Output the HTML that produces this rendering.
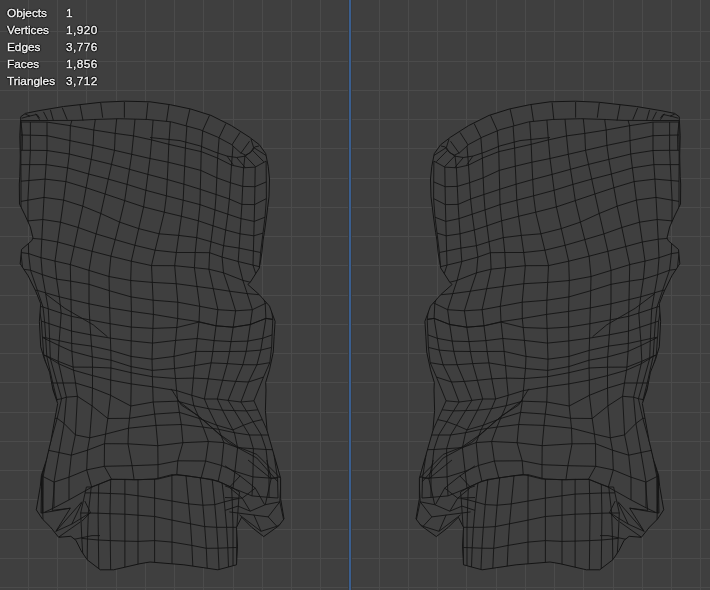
<!DOCTYPE html>
<html><head><meta charset="utf-8"><style>
html,body{margin:0;padding:0;width:710px;height:590px;overflow:hidden;background:#3f3f3f}
.t{position:absolute;font-family:"Liberation Sans",sans-serif;font-size:11.8px;line-height:14px;color:#f4f4f4;white-space:nowrap;text-shadow:1px 0 1px #000,-1px 0 1px #000,0 1px 1px #000,0 -1px 1px #000;-webkit-text-stroke:0.35px #f4f4f4;will-change:transform}
</style></head><body>
<svg width="710" height="590" viewBox="0 0 710 590" style="position:absolute;left:0;top:0"><rect width="710" height="590" fill="#3f3f3f"/><path d="M28.5 0V590M57.5 0V590M86.5 0V590M116.5 0V590M145.5 0V590M174.5 0V590M203.5 0V590M233.5 0V590M262.5 0V590M291.5 0V590M320.5 0V590M350.5 0V590M379.5 0V590M408.5 0V590M437.5 0V590M466.5 0V590M496.5 0V590M525.5 0V590M554.5 0V590M583.5 0V590M613.5 0V590M642.5 0V590M671.5 0V590M700.5 0V590M0 31.5H710M0 61.5H710M0 90.5H710M0 119.5H710M0 148.5H710M0 178.5H710M0 207.5H710M0 236.5H710M0 265.5H710M0 295.5H710M0 324.5H710M0 353.5H710M0 382.5H710M0 412.5H710M0 441.5H710M0 470.5H710M0 499.5H710M0 529.5H710M0 558.5H710M0 587.5H710" stroke="#4b4b4b" stroke-width="1" fill="none"/><rect x="348" y="0" width="4" height="590" fill="#3a3a3a"/><rect x="349" y="0" width="2" height="590" fill="#3a5e8e"/><defs><clipPath id="cl"><polygon points="20.8,116.7 25.4,113.4 38.1,110.8 63.6,106.5 101.7,102.2 124.6,101.2 150.0,101.8 170.3,104.7 190.7,109.0 211.0,115.4 231.4,125.6 249.2,137.0 259.3,144.7 265.7,153.6 268.2,166.3 269.5,179.0 269.0,196.8 266.5,217.0 264.4,232.4 263.1,240.0 261.9,252.7 259.3,268.0 250.4,282.0 247.9,284.5 259.3,294.7 269.5,306.1 275.1,321.4 274.1,336.6 273.3,351.9 269.5,369.7 265.7,382.4 266.0,390.0 265.4,410.4 267.1,430.7 273.9,454.5 280.6,478.2 280.6,498.6 284.0,518.9 278.9,525.7 263.7,536.6 251.8,527.4 241.6,517.2 236.5,527.4 237.5,546.1 236.5,564.8 217.9,569.8 183.9,564.8 150.0,562.0 140.0,563.7 113.6,569.8 100.3,569.8 87.1,559.7 81.0,550.5 75.9,540.3 70.8,536.3 58.6,537.3 50.5,527.1 42.4,519.0 36.3,509.8 40.3,486.4 41.4,475.3 46.4,460.0 50.9,440.9 57.7,403.6 53.0,390.0 49.6,372.2 44.5,359.5 40.7,346.8 39.4,321.4 40.7,303.6 35.6,290.9 28.0,275.6 20.2,263.8 21.5,249.5 31.7,240.7 33.0,238.0 30.4,227.1 24.9,214.9 19.5,204.0 19.3,184.0 19.8,176.4 20.3,156.0 19.8,135.8"/></clipPath></defs><g><polygon points="20.8,116.7 25.4,113.4 38.1,110.8 63.6,106.5 101.7,102.2 124.6,101.2 150.0,101.8 170.3,104.7 190.7,109.0 211.0,115.4 231.4,125.6 249.2,137.0 259.3,144.7 265.7,153.6 268.2,166.3 269.5,179.0 269.0,196.8 266.5,217.0 264.4,232.4 263.1,240.0 261.9,252.7 259.3,268.0 250.4,282.0 247.9,284.5 259.3,294.7 269.5,306.1 275.1,321.4 274.1,336.6 273.3,351.9 269.5,369.7 265.7,382.4 266.0,390.0 265.4,410.4 267.1,430.7 273.9,454.5 280.6,478.2 280.6,498.6 284.0,518.9 278.9,525.7 263.7,536.6 251.8,527.4 241.6,517.2 236.5,527.4 237.5,546.1 236.5,564.8 217.9,569.8 183.9,564.8 150.0,562.0 140.0,563.7 113.6,569.8 100.3,569.8 87.1,559.7 81.0,550.5 75.9,540.3 70.8,536.3 58.6,537.3 50.5,527.1 42.4,519.0 36.3,509.8 40.3,486.4 41.4,475.3 46.4,460.0 50.9,440.9 57.7,403.6 53.0,390.0 49.6,372.2 44.5,359.5 40.7,346.8 39.4,321.4 40.7,303.6 35.6,290.9 28.0,275.6 20.2,263.8 21.5,249.5 31.7,240.7 33.0,238.0 30.4,227.1 24.9,214.9 19.5,204.0 19.3,184.0 19.8,176.4 20.3,156.0 19.8,135.8" fill="#3f3f3f"/><path d="M21.0 122.0 L30.4 122.0 L47.0 122.1 L70.4 125.7 L93.8 130.0 L115.2 133.4 L133.5 135.9 L151.6 139.9 L168.8 144.3 L185.4 148.1 L201.2 151.6 L217.6 158.1 L231.5 165.1 L243.6 167.8 L255.2 167.1 L266.1 161.1M21.0 135.0 L30.4 135.2 L47.0 135.7 L70.0 140.6 L93.1 145.4 L114.5 150.3 L131.7 154.3 L150.0 158.5 L168.1 162.2 L184.7 166.2 L200.8 170.4 L216.8 177.8 L230.4 182.7 L242.7 186.4 L254.9 186.7 L266.3 181.9M20.9 150.3 L30.4 150.3 L47.0 150.5 L69.3 154.0 L91.2 159.4 L111.5 164.4 L129.5 169.3 L147.9 174.4 L167.3 179.5 L183.9 184.2 L200.3 189.3 L216.1 194.5 L229.4 199.0 L241.9 204.4 L254.6 204.6 L266.4 198.6M20.9 164.6 L29.7 164.6 L46.1 164.6 L67.6 167.9 L88.6 174.0 L108.3 179.1 L127.1 184.4 L145.9 190.3 L166.4 195.8 L183.2 200.2 L200.0 204.6 L215.0 209.9 L227.8 214.2 L241.0 218.6 L254.2 221.4 L265.0 217.2M21.0 181.2 L28.9 180.5 L45.1 179.1 L65.9 181.6 L86.1 187.7 L105.1 194.0 L124.7 200.6 L143.6 206.9 L164.3 212.2 L181.4 216.3 L198.4 220.8 L213.0 225.8 L225.7 230.0 L240.0 233.8 L253.8 235.8 L263.0 233.1M21.0 201.4 L27.9 200.2 L44.0 197.4 L63.6 200.1 L82.8 206.2 L100.8 213.5 L119.6 222.1 L138.7 228.6 L159.1 233.8 L178.7 235.4 L196.7 237.6 L211.0 241.7 L223.6 245.7 L239.1 248.1 L253.4 251.0 L260.6 252.5M21.0 221.5 L28.0 220.9 L42.8 219.5 L60.5 222.2 L78.2 227.5 L96.1 233.9 L115.2 239.6 L134.9 245.3 L155.1 250.2 L176.3 252.5 L195.2 252.5 L209.6 252.7 L222.1 257.1 L238.2 261.5 L253.0 265.1 L259.5 266.7M20.9 238.0 L28.3 238.0 L41.8 239.2 L57.7 242.0 L74.2 246.5 L92.1 251.3 L110.9 256.2 L131.3 261.2 L151.5 265.6 L174.7 265.7 L194.4 267.7 L208.9 269.2 L223.5 272.8 L242.9 280.4 L259.2 284.5 L265.2 284.5M20.9 252.5 L28.6 253.6 L41.0 257.7 L55.0 261.1 L70.3 264.6 L89.0 270.4 L109.0 276.5 L130.7 280.5 L152.3 282.4 L176.2 283.7 L197.0 286.5 L213.3 288.7 L229.6 291.2 L247.2 293.6 L262.5 295.0 L268.5 295.0M22.7 269.2 L30.5 270.2 L42.3 274.6 L56.6 279.1 L70.6 281.1 L89.0 284.3 L109.3 290.7 L131.1 296.9 L153.1 300.2 L177.8 302.2 L199.7 306.3 L217.9 309.7 L235.6 310.8 L252.4 309.7 L265.2 303.5 L270.4 301.0M31.8 290.0 L37.4 290.4 L45.5 292.8 L59.3 296.8 L71.0 299.6 L89.0 303.8 L109.7 307.9 L131.4 311.4 L153.4 314.4 L177.7 318.5 L199.0 321.7 L216.0 325.8 L233.2 327.2 L250.3 324.5 L265.9 318.4 L272.8 319.4M38.8 306.0 L43.0 307.0 L48.3 308.8 L61.2 313.1 L71.3 316.3 L89.7 319.9 L110.1 323.7 L131.3 327.1 L152.9 328.4 L176.8 327.5 L198.9 322.1 L216.0 325.8 L233.2 327.2 L250.3 324.5 L265.9 318.4 L272.8 319.4M41.4 321.1 L44.7 322.2 L49.0 323.6 L60.2 327.3 L71.5 331.1 L90.7 334.8 L110.4 338.1 L131.2 340.9 L152.5 343.1 L175.6 340.4 L197.2 338.5 L214.1 340.6 L231.0 341.6 L247.8 341.1 L262.7 338.3 L272.1 334.9M42.4 337.1 L45.7 337.8 L49.6 338.6 L59.2 340.7 L71.7 343.4 L91.5 346.1 L110.8 350.4 L131.0 356.4 L152.0 359.2 L174.0 356.4 L195.9 351.4 L212.8 351.5 L229.6 351.5 L246.2 351.3 L260.8 350.1 L271.6 347.4M42.5 337.5 L45.7 339.1 L49.7 341.0 L58.9 345.5 L71.9 351.4 L92.3 356.9 L111.0 360.2 L131.1 366.6 L152.3 370.4 L174.5 368.5 L194.5 365.6 L211.1 362.9 L227.3 363.6 L242.9 364.7 L256.9 364.8 L269.8 362.7M43.7 355.0 L46.8 356.0 L50.3 357.7 L58.2 361.3 L73.1 367.1 L92.5 367.2 L110.9 368.0 L131.1 372.7 L152.4 376.7 L175.5 378.5 L193.4 378.1 L208.2 378.8 L222.6 380.3 L235.7 381.4 L248.5 382.0 L263.5 377.1M43.7 355.0 L46.8 356.4 L50.3 358.6 L58.8 363.8 L73.5 370.2 L92.5 375.6 L110.7 380.1 L131.2 383.9 L152.7 386.8 L176.6 390.6 L191.8 395.3 L204.4 399.0 L217.3 399.0 L228.1 400.4 L240.9 402.0 L253.9 400.8M51.1 383.0 L52.8 383.0 L57.1 383.0 L63.1 383.0 L75.5 383.0 L92.5 388.1 L110.6 395.3 L130.8 406.0 L153.2 402.0 L177.7 401.2 L193.8 405.7 L208.5 408.7 L222.5 410.2 L234.4 410.6 L246.4 410.9 L257.9 409.8M56.3 399.6 L56.9 399.6 L61.6 398.7 L66.4 397.2 L77.4 396.3 L92.1 405.9 L107.8 418.5 L129.5 418.3 L154.7 414.1 L179.4 412.4 L199.4 418.5 L216.7 425.2 L232.9 429.9 L243.4 425.3 L253.1 421.7 L262.3 419.6M53.9 418.3 L54.3 418.3 L57.2 418.3 L64.1 423.5 L75.4 434.9 L89.7 437.8 L105.6 434.1 L128.5 428.2 L156.0 425.4 L181.3 424.5 L203.1 427.1 L218.7 429.3 L234.4 432.7 L249.4 435.0 L261.3 435.0 L269.2 435.0M47.6 450.3 L47.9 450.3 L48.3 450.3 L59.0 452.5 L71.3 455.2 L87.5 450.2 L104.5 443.7 L128.0 443.8 L157.8 445.7 L182.9 442.7 L208.4 441.5 L223.8 442.6 L237.6 447.6 L253.4 448.7 L266.1 449.5 L273.2 449.7M41.7 475.9 L42.4 476.3 L43.2 476.6 L54.0 482.1 L69.0 477.2 L86.7 469.9 L104.3 466.3 L132.1 465.7 L158.0 464.7 L177.8 460.8 L205.6 461.0 L221.6 465.5 L234.9 471.3 L252.9 476.9 L269.0 478.0 L277.5 478.1M41.0 513.0 L42.0 513.0 L43.0 513.0 L54.0 507.8 L69.0 499.9 L91.7 487.2 L111.5 479.2 L134.1 479.8 L158.0 479.0 L176.8 474.4 L201.2 477.9 L218.2 481.2 L233.0 488.2 L252.0 495.9 L269.0 497.4 L278.0 498.0M21.0 122.0 L21.0 135.0 L20.9 150.3 L20.9 164.6 L21.0 181.2 L21.0 201.4 L21.0 221.5 L20.9 238.0 L20.9 252.5 L22.7 269.2 L31.8 290.0 L38.8 306.0 L41.4 321.1 L42.4 337.1 L42.5 337.5 L43.7 355.0 L43.7 355.0 L51.1 383.0 L56.3 399.6 L53.9 418.3 L47.6 450.3 L41.7 475.9 L41.0 513.0M30.4 122.0 L30.4 135.2 L30.4 150.3 L29.7 164.6 L28.9 180.5 L27.9 200.2 L28.0 220.9 L28.3 238.0 L28.6 253.6 L30.5 270.2 L37.4 290.4 L43.0 307.0 L44.7 322.2 L45.7 337.8 L45.7 339.1 L46.8 356.0 L46.8 356.4 L52.8 383.0 L56.9 399.6 L54.3 418.3 L47.9 450.3 L42.4 476.3 L42.0 513.0M47.0 122.1 L47.0 135.7 L47.0 150.5 L46.1 164.6 L45.1 179.1 L44.0 197.4 L42.8 219.5 L41.8 239.2 L41.0 257.7 L42.3 274.6 L45.5 292.8 L48.3 308.8 L49.0 323.6 L49.6 338.6 L49.7 341.0 L50.3 357.7 L50.3 358.6 L57.1 383.0 L61.6 398.7 L57.2 418.3 L48.3 450.3 L43.2 476.6 L43.0 513.0M70.4 125.7 L70.0 140.6 L69.3 154.0 L67.6 167.9 L65.9 181.6 L63.6 200.1 L60.5 222.2 L57.7 242.0 L55.0 261.1 L56.6 279.1 L59.3 296.8 L61.2 313.1 L60.2 327.3 L59.2 340.7 L58.9 345.5 L58.2 361.3 L58.8 363.8 L63.1 383.0 L66.4 397.2 L64.1 423.5 L59.0 452.5 L54.0 482.1 L54.0 507.8M93.8 130.0 L93.1 145.4 L91.2 159.4 L88.6 174.0 L86.1 187.7 L82.8 206.2 L78.2 227.5 L74.2 246.5 L70.3 264.6 L70.6 281.1 L71.0 299.6 L71.3 316.3 L71.5 331.1 L71.7 343.4 L71.9 351.4 L73.1 367.1 L73.5 370.2 L75.5 383.0 L77.4 396.3 L75.4 434.9 L71.3 455.2 L69.0 477.2 L69.0 499.9M115.2 133.4 L114.5 150.3 L111.5 164.4 L108.3 179.1 L105.1 194.0 L100.8 213.5 L96.1 233.9 L92.1 251.3 L89.0 270.4 L89.0 284.3 L89.0 303.8 L89.7 319.9 L90.7 334.8 L91.5 346.1 L92.3 356.9 L92.5 367.2 L92.5 375.6 L92.5 388.1 L92.1 405.9 L89.7 437.8 L87.5 450.2 L86.7 469.9 L91.7 487.2M133.5 135.9 L131.7 154.3 L129.5 169.3 L127.1 184.4 L124.7 200.6 L119.6 222.1 L115.2 239.6 L110.9 256.2 L109.0 276.5 L109.3 290.7 L109.7 307.9 L110.1 323.7 L110.4 338.1 L110.8 350.4 L111.0 360.2 L110.9 368.0 L110.7 380.1 L110.6 395.3 L107.8 418.5 L105.6 434.1 L104.5 443.7 L104.3 466.3 L111.5 479.2M151.6 139.9 L150.0 158.5 L147.9 174.4 L145.9 190.3 L143.6 206.9 L138.7 228.6 L134.9 245.3 L131.3 261.2 L130.7 280.5 L131.1 296.9 L131.4 311.4 L131.3 327.1 L131.2 340.9 L131.0 356.4 L131.1 366.6 L131.1 372.7 L131.2 383.9 L130.8 406.0 L129.5 418.3 L128.5 428.2 L128.0 443.8 L132.1 465.7 L134.1 479.8M168.8 144.3 L168.1 162.2 L167.3 179.5 L166.4 195.8 L164.3 212.2 L159.1 233.8 L155.1 250.2 L151.5 265.6 L152.3 282.4 L153.1 300.2 L153.4 314.4 L152.9 328.4 L152.5 343.1 L152.0 359.2 L152.3 370.4 L152.4 376.7 L152.7 386.8 L153.2 402.0 L154.7 414.1 L156.0 425.4 L157.8 445.7 L158.0 464.7 L158.0 479.0M185.4 148.1 L184.7 166.2 L183.9 184.2 L183.2 200.2 L181.4 216.3 L178.7 235.4 L176.3 252.5 L174.7 265.7 L176.2 283.7 L177.8 302.2 L177.7 318.5 L176.8 327.5 L175.6 340.4 L174.0 356.4 L174.5 368.5 L175.5 378.5 L176.6 390.6 L177.7 401.2 L179.4 412.4 L181.3 424.5 L182.9 442.7 L177.8 460.8 L176.8 474.4M201.2 151.6 L200.8 170.4 L200.3 189.3 L200.0 204.6 L198.4 220.8 L196.7 237.6 L195.2 252.5 L194.4 267.7 L197.0 286.5 L199.7 306.3 L199.0 321.7 L198.9 322.1 L197.2 338.5 L195.9 351.4 L194.5 365.6 L193.4 378.1 L191.8 395.3 L193.8 405.7 L199.4 418.5 L203.1 427.1 L208.4 441.5 L205.6 461.0 L201.2 477.9M217.6 158.1 L216.8 177.8 L216.1 194.5 L215.0 209.9 L213.0 225.8 L211.0 241.7 L209.6 252.7 L208.9 269.2 L213.3 288.7 L217.9 309.7 L216.0 325.8 L216.0 325.8 L214.1 340.6 L212.8 351.5 L211.1 362.9 L208.2 378.8 L204.4 399.0 L208.5 408.7 L216.7 425.2 L218.7 429.3 L223.8 442.6 L221.6 465.5 L218.2 481.2M231.5 165.1 L230.4 182.7 L229.4 199.0 L227.8 214.2 L225.7 230.0 L223.6 245.7 L222.1 257.1 L223.5 272.8 L229.6 291.2 L235.6 310.8 L233.2 327.2 L233.2 327.2 L231.0 341.6 L229.6 351.5 L227.3 363.6 L222.6 380.3 L217.3 399.0 L222.5 410.2 L232.9 429.9 L234.4 432.7 L237.6 447.6 L234.9 471.3 L233.0 488.2M243.6 167.8 L242.7 186.4 L241.9 204.4 L241.0 218.6 L240.0 233.8 L239.1 248.1 L238.2 261.5 L242.9 280.4 L247.2 293.6 L252.4 309.7 L250.3 324.5 L250.3 324.5 L247.8 341.1 L246.2 351.3 L242.9 364.7 L235.7 381.4 L228.1 400.4 L234.4 410.6 L243.4 425.3 L249.4 435.0 L253.4 448.7 L252.9 476.9 L252.0 495.9M255.2 167.1 L254.9 186.7 L254.6 204.6 L254.2 221.4 L253.8 235.8 L253.4 251.0 L253.0 265.1 L259.2 284.5 L262.5 295.0 L265.2 303.5 L265.9 318.4 L265.9 318.4 L262.7 338.3 L260.8 350.1 L256.9 364.8 L248.5 382.0 L240.9 402.0 L246.4 410.9 L253.1 421.7 L261.3 435.0 L266.1 449.5 L269.0 478.0 L269.0 497.4M266.1 161.1 L266.3 181.9 L266.4 198.6 L265.0 217.2 L263.0 233.1 L260.6 252.5 L259.5 266.7 L265.2 284.5 L268.5 295.0 L270.4 301.0 L272.8 319.4 L272.8 319.4 L272.1 334.9 L271.6 347.4 L269.8 362.7 L263.5 377.1 L253.9 400.8 L257.9 409.8 L262.3 419.6 L269.2 435.0 L273.2 449.7 L277.5 478.1 L278.0 498.0M86.4 487.0 L91.2 487.0 L98.7 484.3 L110.7 479.5 L124.9 479.3 L138.0 479.7 L154.6 479.1 L171.9 474.7 L186.0 475.8 L200.3 477.8 L212.2 479.4 L222.1 483.0 L231.6 487.3 L239.5 492.0M85.1 492.9 L90.6 492.9 L98.5 493.0 L110.4 493.5 L124.9 494.1 L138.0 495.8 L154.6 498.1 L172.0 501.0 L188.7 503.9 L202.9 505.2 L214.8 504.6 L224.3 501.9 L232.2 499.8 L238.8 498.5M80.7 513.0 L88.3 513.0 L98.1 513.2 L110.0 513.7 L124.9 514.2 L138.0 515.2 L154.6 516.5 L172.0 520.1 L190.5 523.8 L204.7 526.6 L216.7 527.3 L226.6 527.3 L233.0 527.3 L236.9 527.3M81.8 538.4 L87.5 539.0 L98.4 540.0 L110.3 540.6 L124.9 541.1 L138.0 541.4 L154.6 540.6 L172.0 542.1 L191.9 545.4 L206.3 548.3 L218.1 548.2 L227.8 547.8 L233.0 547.6 L236.7 547.5M86.4 487.0 L85.1 492.9 L80.7 513.0 L81.8 538.4 L84.0 575.0M91.2 487.0 L90.6 492.9 L88.3 513.0 L87.5 539.0 L87.0 575.0M98.7 484.3 L98.5 493.0 L98.1 513.2 L98.4 540.0 L98.8 575.0M110.7 479.5 L110.4 493.5 L110.0 513.7 L110.3 540.6 L110.7 575.0M124.9 479.3 L124.9 494.1 L124.9 514.2 L124.9 541.1 L124.9 575.0M138.0 479.7 L138.0 495.8 L138.0 515.2 L138.0 541.4 L138.0 575.0M154.6 479.1 L154.6 498.1 L154.6 516.5 L154.6 540.6 L154.6 575.0M171.9 474.7 L172.0 501.0 L172.0 520.1 L172.0 542.1 L172.0 575.0M186.0 475.8 L188.7 503.9 L190.5 523.8 L191.9 545.4 L193.2 575.0M200.3 477.8 L202.9 505.2 L204.7 526.6 L206.3 548.3 L207.5 575.0M212.2 479.4 L214.8 504.6 L216.7 527.3 L218.1 548.2 L219.3 575.0M222.1 483.0 L224.3 501.9 L226.6 527.3 L227.8 547.8 L228.8 575.0M231.6 487.3 L232.2 499.8 L233.0 527.3 L233.0 547.6 L233.0 575.0M239.5 492.0 L238.8 498.5 L236.9 527.3 L236.7 547.5 L236.5 575.0M20.7 120.5 L45.0 120.5 L76.9 120.4 L93.8 119.5 L119.2 118.7 L147.9 119.5 L171.5 121.9 L200.0 129.7 L217.6 137.1 L231.2 144.4 L240.3 152.6 L245.4 155.1 L250.5 152.6 L253.6 147.5 L251.0 139.0M70.4 125.7 L71.9 120.4M93.8 130.0 L95.3 119.5M115.2 133.4 L116.7 118.8M133.5 135.9 L135.0 119.1M151.6 139.9 L153.1 120.0M168.8 144.3 L170.3 121.8M185.4 148.1 L186.9 126.1M201.2 151.6 L202.7 130.8M217.6 158.1 L219.1 137.9M231.5 165.1 L233.0 146.1M243.6 167.8 L245.1 154.9M35.6 113.7 L39.6 119.7M43.5 111.8 L47.5 119.7M50.4 109.8 L53.4 120.6M62.3 107.8 L67.2 119.7M80.0 104.9 L83.0 120.6M100.7 102.9 L102.7 117.7M124.4 101.9 L124.4 117.7M147.9 102.6 L146.2 119.5M169.0 104.3 L166.5 121.2M190.0 108.7 L186.0 126.0M209.5 115.4 L202.7 130.5M225.8 123.6 L219.0 137.8M240.0 132.4 L231.9 145.0M249.5 141.2 L240.7 153.4M150.0 137.5 L180.0 140.6 L200.0 145.9 L214.9 152.0 L227.1 156.1 L236.6 157.5 L245.4 156.1 L252.6 150.5 L254.6 147.0 L259.0 146.0M227.1 156.1 L233.2 164.8M236.6 157.5 L245.4 167.8M245.4 156.1 L255.6 166.8M252.6 150.5 L263.7 161.7M253.6 147.5 L266.3 155.6M20.9 121.0 L22.4 135.6 L22.2 150.0M21.8 118.2 L27.7 116.5 L37.0 114.4 L39.6 118.2M24.3 113.6 L30.0 116.2M171.2 388.8 L181.4 405.1 L197.6 415.3 L220.0 434.6 L238.0 447.0 L256.8 454.4 L280.5 478.1M178.5 401.0 L204.6 421.2 L228.3 442.5 L256.8 458.0 L278.0 482.0M45.8 294.0 L64.8 308.3 L93.3 324.9 L107.5 336.8M52.3 510.4 L70.3 508.2M44.4 512.6 L70.3 508.2 L55.9 531.3M55.9 531.3 L81.9 501.7M71.8 524.1 L81.9 502.5M84.8 501.0 L90.5 512.6 L81.9 521.2M55.9 531.3 L71.8 524.1 L90.5 512.6M58.8 537.0 L80.4 521.9M58.8 537.0 L74.7 539.2 L92.0 535.6 L100.0 535.6M41.5 475.8 L43.0 519.8M54.5 482.3 L52.3 510.4M225.0 465.8 L240.1 475.9 L255.3 488.1 L264.6 504.7M248.0 460.0 L255.3 465.8 L271.1 478.7 L281.2 476.6M266.8 460.0 L271.1 478.7 L265.3 504.7M275.4 460.0 L281.2 476.6 L279.8 501.8M225.0 485.9 L229.3 487.4 L240.1 475.9M229.3 487.4 L242.3 498.2 L255.3 488.1M225.0 497.5 L242.3 498.2 L250.2 511.2 L265.3 504.7 L279.8 501.8M225.0 510.4 L238.0 506.1 L250.2 511.2M229.3 511.9 L268.2 516.9 L279.8 501.8M268.2 516.9 L276.9 526.3 L284.1 522.0 L279.8 501.8M239.4 514.8 L261.0 531.3 L276.9 526.3M253.8 514.8 L261.0 531.3" clip-path="url(#cl)" stroke="#141414" stroke-width="0.9" fill="none" stroke-linejoin="round"/><polygon points="20.8,116.7 25.4,113.4 38.1,110.8 63.6,106.5 101.7,102.2 124.6,101.2 150.0,101.8 170.3,104.7 190.7,109.0 211.0,115.4 231.4,125.6 249.2,137.0 259.3,144.7 265.7,153.6 268.2,166.3 269.5,179.0 269.0,196.8 266.5,217.0 264.4,232.4 263.1,240.0 261.9,252.7 259.3,268.0 250.4,282.0 247.9,284.5 259.3,294.7 269.5,306.1 275.1,321.4 274.1,336.6 273.3,351.9 269.5,369.7 265.7,382.4 266.0,390.0 265.4,410.4 267.1,430.7 273.9,454.5 280.6,478.2 280.6,498.6 284.0,518.9 278.9,525.7 263.7,536.6 251.8,527.4 241.6,517.2 236.5,527.4 237.5,546.1 236.5,564.8 217.9,569.8 183.9,564.8 150.0,562.0 140.0,563.7 113.6,569.8 100.3,569.8 87.1,559.7 81.0,550.5 75.9,540.3 70.8,536.3 58.6,537.3 50.5,527.1 42.4,519.0 36.3,509.8 40.3,486.4 41.4,475.3 46.4,460.0 50.9,440.9 57.7,403.6 53.0,390.0 49.6,372.2 44.5,359.5 40.7,346.8 39.4,321.4 40.7,303.6 35.6,290.9 28.0,275.6 20.2,263.8 21.5,249.5 31.7,240.7 33.0,238.0 30.4,227.1 24.9,214.9 19.5,204.0 19.3,184.0 19.8,176.4 20.3,156.0 19.8,135.8" fill="none" stroke="#141414" stroke-width="1" stroke-linejoin="round"/></g><g transform="translate(700.0,0) scale(-1,1)"><polygon points="20.8,116.7 25.4,113.4 38.1,110.8 63.6,106.5 101.7,102.2 124.6,101.2 150.0,101.8 170.3,104.7 190.7,109.0 211.0,115.4 231.4,125.6 249.2,137.0 259.3,144.7 265.7,153.6 268.2,166.3 269.5,179.0 269.0,196.8 266.5,217.0 264.4,232.4 263.1,240.0 261.9,252.7 259.3,268.0 250.4,282.0 247.9,284.5 259.3,294.7 269.5,306.1 275.1,321.4 274.1,336.6 273.3,351.9 269.5,369.7 265.7,382.4 266.0,390.0 265.4,410.4 267.1,430.7 273.9,454.5 280.6,478.2 280.6,498.6 284.0,518.9 278.9,525.7 263.7,536.6 251.8,527.4 241.6,517.2 236.5,527.4 237.5,546.1 236.5,564.8 217.9,569.8 183.9,564.8 150.0,562.0 140.0,563.7 113.6,569.8 100.3,569.8 87.1,559.7 81.0,550.5 75.9,540.3 70.8,536.3 58.6,537.3 50.5,527.1 42.4,519.0 36.3,509.8 40.3,486.4 41.4,475.3 46.4,460.0 50.9,440.9 57.7,403.6 53.0,390.0 49.6,372.2 44.5,359.5 40.7,346.8 39.4,321.4 40.7,303.6 35.6,290.9 28.0,275.6 20.2,263.8 21.5,249.5 31.7,240.7 33.0,238.0 30.4,227.1 24.9,214.9 19.5,204.0 19.3,184.0 19.8,176.4 20.3,156.0 19.8,135.8" fill="#3f3f3f"/><path d="M21.0 122.0 L30.4 122.0 L47.0 122.1 L70.4 125.7 L93.8 130.0 L115.2 133.4 L133.5 135.9 L151.6 139.9 L168.8 144.3 L185.4 148.1 L201.2 151.6 L217.6 158.1 L231.5 165.1 L243.6 167.8 L255.2 167.1 L266.1 161.1M21.0 135.0 L30.4 135.2 L47.0 135.7 L70.0 140.6 L93.1 145.4 L114.5 150.3 L131.7 154.3 L150.0 158.5 L168.1 162.2 L184.7 166.2 L200.8 170.4 L216.8 177.8 L230.4 182.7 L242.7 186.4 L254.9 186.7 L266.3 181.9M20.9 150.3 L30.4 150.3 L47.0 150.5 L69.3 154.0 L91.2 159.4 L111.5 164.4 L129.5 169.3 L147.9 174.4 L167.3 179.5 L183.9 184.2 L200.3 189.3 L216.1 194.5 L229.4 199.0 L241.9 204.4 L254.6 204.6 L266.4 198.6M20.9 164.6 L29.7 164.6 L46.1 164.6 L67.6 167.9 L88.6 174.0 L108.3 179.1 L127.1 184.4 L145.9 190.3 L166.4 195.8 L183.2 200.2 L200.0 204.6 L215.0 209.9 L227.8 214.2 L241.0 218.6 L254.2 221.4 L265.0 217.2M21.0 181.2 L28.9 180.5 L45.1 179.1 L65.9 181.6 L86.1 187.7 L105.1 194.0 L124.7 200.6 L143.6 206.9 L164.3 212.2 L181.4 216.3 L198.4 220.8 L213.0 225.8 L225.7 230.0 L240.0 233.8 L253.8 235.8 L263.0 233.1M21.0 201.4 L27.9 200.2 L44.0 197.4 L63.6 200.1 L82.8 206.2 L100.8 213.5 L119.6 222.1 L138.7 228.6 L159.1 233.8 L178.7 235.4 L196.7 237.6 L211.0 241.7 L223.6 245.7 L239.1 248.1 L253.4 251.0 L260.6 252.5M21.0 221.5 L28.0 220.9 L42.8 219.5 L60.5 222.2 L78.2 227.5 L96.1 233.9 L115.2 239.6 L134.9 245.3 L155.1 250.2 L176.3 252.5 L195.2 252.5 L209.6 252.7 L222.1 257.1 L238.2 261.5 L253.0 265.1 L259.5 266.7M20.9 238.0 L28.3 238.0 L41.8 239.2 L57.7 242.0 L74.2 246.5 L92.1 251.3 L110.9 256.2 L131.3 261.2 L151.5 265.6 L174.7 265.7 L194.4 267.7 L208.9 269.2 L223.5 272.8 L242.9 280.4 L259.2 284.5 L265.2 284.5M20.9 252.5 L28.6 253.6 L41.0 257.7 L55.0 261.1 L70.3 264.6 L89.0 270.4 L109.0 276.5 L130.7 280.5 L152.3 282.4 L176.2 283.7 L197.0 286.5 L213.3 288.7 L229.6 291.2 L247.2 293.6 L262.5 295.0 L268.5 295.0M22.7 269.2 L30.5 270.2 L42.3 274.6 L56.6 279.1 L70.6 281.1 L89.0 284.3 L109.3 290.7 L131.1 296.9 L153.1 300.2 L177.8 302.2 L199.7 306.3 L217.9 309.7 L235.6 310.8 L252.4 309.7 L265.2 303.5 L270.4 301.0M31.8 290.0 L37.4 290.4 L45.5 292.8 L59.3 296.8 L71.0 299.6 L89.0 303.8 L109.7 307.9 L131.4 311.4 L153.4 314.4 L177.7 318.5 L199.0 321.7 L216.0 325.8 L233.2 327.2 L250.3 324.5 L265.9 318.4 L272.8 319.4M38.8 306.0 L43.0 307.0 L48.3 308.8 L61.2 313.1 L71.3 316.3 L89.7 319.9 L110.1 323.7 L131.3 327.1 L152.9 328.4 L176.8 327.5 L198.9 322.1 L216.0 325.8 L233.2 327.2 L250.3 324.5 L265.9 318.4 L272.8 319.4M41.4 321.1 L44.7 322.2 L49.0 323.6 L60.2 327.3 L71.5 331.1 L90.7 334.8 L110.4 338.1 L131.2 340.9 L152.5 343.1 L175.6 340.4 L197.2 338.5 L214.1 340.6 L231.0 341.6 L247.8 341.1 L262.7 338.3 L272.1 334.9M42.4 337.1 L45.7 337.8 L49.6 338.6 L59.2 340.7 L71.7 343.4 L91.5 346.1 L110.8 350.4 L131.0 356.4 L152.0 359.2 L174.0 356.4 L195.9 351.4 L212.8 351.5 L229.6 351.5 L246.2 351.3 L260.8 350.1 L271.6 347.4M42.5 337.5 L45.7 339.1 L49.7 341.0 L58.9 345.5 L71.9 351.4 L92.3 356.9 L111.0 360.2 L131.1 366.6 L152.3 370.4 L174.5 368.5 L194.5 365.6 L211.1 362.9 L227.3 363.6 L242.9 364.7 L256.9 364.8 L269.8 362.7M43.7 355.0 L46.8 356.0 L50.3 357.7 L58.2 361.3 L73.1 367.1 L92.5 367.2 L110.9 368.0 L131.1 372.7 L152.4 376.7 L175.5 378.5 L193.4 378.1 L208.2 378.8 L222.6 380.3 L235.7 381.4 L248.5 382.0 L263.5 377.1M43.7 355.0 L46.8 356.4 L50.3 358.6 L58.8 363.8 L73.5 370.2 L92.5 375.6 L110.7 380.1 L131.2 383.9 L152.7 386.8 L176.6 390.6 L191.8 395.3 L204.4 399.0 L217.3 399.0 L228.1 400.4 L240.9 402.0 L253.9 400.8M51.1 383.0 L52.8 383.0 L57.1 383.0 L63.1 383.0 L75.5 383.0 L92.5 388.1 L110.6 395.3 L130.8 406.0 L153.2 402.0 L177.7 401.2 L193.8 405.7 L208.5 408.7 L222.5 410.2 L234.4 410.6 L246.4 410.9 L257.9 409.8M56.3 399.6 L56.9 399.6 L61.6 398.7 L66.4 397.2 L77.4 396.3 L92.1 405.9 L107.8 418.5 L129.5 418.3 L154.7 414.1 L179.4 412.4 L199.4 418.5 L216.7 425.2 L232.9 429.9 L243.4 425.3 L253.1 421.7 L262.3 419.6M53.9 418.3 L54.3 418.3 L57.2 418.3 L64.1 423.5 L75.4 434.9 L89.7 437.8 L105.6 434.1 L128.5 428.2 L156.0 425.4 L181.3 424.5 L203.1 427.1 L218.7 429.3 L234.4 432.7 L249.4 435.0 L261.3 435.0 L269.2 435.0M47.6 450.3 L47.9 450.3 L48.3 450.3 L59.0 452.5 L71.3 455.2 L87.5 450.2 L104.5 443.7 L128.0 443.8 L157.8 445.7 L182.9 442.7 L208.4 441.5 L223.8 442.6 L237.6 447.6 L253.4 448.7 L266.1 449.5 L273.2 449.7M41.7 475.9 L42.4 476.3 L43.2 476.6 L54.0 482.1 L69.0 477.2 L86.7 469.9 L104.3 466.3 L132.1 465.7 L158.0 464.7 L177.8 460.8 L205.6 461.0 L221.6 465.5 L234.9 471.3 L252.9 476.9 L269.0 478.0 L277.5 478.1M41.0 513.0 L42.0 513.0 L43.0 513.0 L54.0 507.8 L69.0 499.9 L91.7 487.2 L111.5 479.2 L134.1 479.8 L158.0 479.0 L176.8 474.4 L201.2 477.9 L218.2 481.2 L233.0 488.2 L252.0 495.9 L269.0 497.4 L278.0 498.0M21.0 122.0 L21.0 135.0 L20.9 150.3 L20.9 164.6 L21.0 181.2 L21.0 201.4 L21.0 221.5 L20.9 238.0 L20.9 252.5 L22.7 269.2 L31.8 290.0 L38.8 306.0 L41.4 321.1 L42.4 337.1 L42.5 337.5 L43.7 355.0 L43.7 355.0 L51.1 383.0 L56.3 399.6 L53.9 418.3 L47.6 450.3 L41.7 475.9 L41.0 513.0M30.4 122.0 L30.4 135.2 L30.4 150.3 L29.7 164.6 L28.9 180.5 L27.9 200.2 L28.0 220.9 L28.3 238.0 L28.6 253.6 L30.5 270.2 L37.4 290.4 L43.0 307.0 L44.7 322.2 L45.7 337.8 L45.7 339.1 L46.8 356.0 L46.8 356.4 L52.8 383.0 L56.9 399.6 L54.3 418.3 L47.9 450.3 L42.4 476.3 L42.0 513.0M47.0 122.1 L47.0 135.7 L47.0 150.5 L46.1 164.6 L45.1 179.1 L44.0 197.4 L42.8 219.5 L41.8 239.2 L41.0 257.7 L42.3 274.6 L45.5 292.8 L48.3 308.8 L49.0 323.6 L49.6 338.6 L49.7 341.0 L50.3 357.7 L50.3 358.6 L57.1 383.0 L61.6 398.7 L57.2 418.3 L48.3 450.3 L43.2 476.6 L43.0 513.0M70.4 125.7 L70.0 140.6 L69.3 154.0 L67.6 167.9 L65.9 181.6 L63.6 200.1 L60.5 222.2 L57.7 242.0 L55.0 261.1 L56.6 279.1 L59.3 296.8 L61.2 313.1 L60.2 327.3 L59.2 340.7 L58.9 345.5 L58.2 361.3 L58.8 363.8 L63.1 383.0 L66.4 397.2 L64.1 423.5 L59.0 452.5 L54.0 482.1 L54.0 507.8M93.8 130.0 L93.1 145.4 L91.2 159.4 L88.6 174.0 L86.1 187.7 L82.8 206.2 L78.2 227.5 L74.2 246.5 L70.3 264.6 L70.6 281.1 L71.0 299.6 L71.3 316.3 L71.5 331.1 L71.7 343.4 L71.9 351.4 L73.1 367.1 L73.5 370.2 L75.5 383.0 L77.4 396.3 L75.4 434.9 L71.3 455.2 L69.0 477.2 L69.0 499.9M115.2 133.4 L114.5 150.3 L111.5 164.4 L108.3 179.1 L105.1 194.0 L100.8 213.5 L96.1 233.9 L92.1 251.3 L89.0 270.4 L89.0 284.3 L89.0 303.8 L89.7 319.9 L90.7 334.8 L91.5 346.1 L92.3 356.9 L92.5 367.2 L92.5 375.6 L92.5 388.1 L92.1 405.9 L89.7 437.8 L87.5 450.2 L86.7 469.9 L91.7 487.2M133.5 135.9 L131.7 154.3 L129.5 169.3 L127.1 184.4 L124.7 200.6 L119.6 222.1 L115.2 239.6 L110.9 256.2 L109.0 276.5 L109.3 290.7 L109.7 307.9 L110.1 323.7 L110.4 338.1 L110.8 350.4 L111.0 360.2 L110.9 368.0 L110.7 380.1 L110.6 395.3 L107.8 418.5 L105.6 434.1 L104.5 443.7 L104.3 466.3 L111.5 479.2M151.6 139.9 L150.0 158.5 L147.9 174.4 L145.9 190.3 L143.6 206.9 L138.7 228.6 L134.9 245.3 L131.3 261.2 L130.7 280.5 L131.1 296.9 L131.4 311.4 L131.3 327.1 L131.2 340.9 L131.0 356.4 L131.1 366.6 L131.1 372.7 L131.2 383.9 L130.8 406.0 L129.5 418.3 L128.5 428.2 L128.0 443.8 L132.1 465.7 L134.1 479.8M168.8 144.3 L168.1 162.2 L167.3 179.5 L166.4 195.8 L164.3 212.2 L159.1 233.8 L155.1 250.2 L151.5 265.6 L152.3 282.4 L153.1 300.2 L153.4 314.4 L152.9 328.4 L152.5 343.1 L152.0 359.2 L152.3 370.4 L152.4 376.7 L152.7 386.8 L153.2 402.0 L154.7 414.1 L156.0 425.4 L157.8 445.7 L158.0 464.7 L158.0 479.0M185.4 148.1 L184.7 166.2 L183.9 184.2 L183.2 200.2 L181.4 216.3 L178.7 235.4 L176.3 252.5 L174.7 265.7 L176.2 283.7 L177.8 302.2 L177.7 318.5 L176.8 327.5 L175.6 340.4 L174.0 356.4 L174.5 368.5 L175.5 378.5 L176.6 390.6 L177.7 401.2 L179.4 412.4 L181.3 424.5 L182.9 442.7 L177.8 460.8 L176.8 474.4M201.2 151.6 L200.8 170.4 L200.3 189.3 L200.0 204.6 L198.4 220.8 L196.7 237.6 L195.2 252.5 L194.4 267.7 L197.0 286.5 L199.7 306.3 L199.0 321.7 L198.9 322.1 L197.2 338.5 L195.9 351.4 L194.5 365.6 L193.4 378.1 L191.8 395.3 L193.8 405.7 L199.4 418.5 L203.1 427.1 L208.4 441.5 L205.6 461.0 L201.2 477.9M217.6 158.1 L216.8 177.8 L216.1 194.5 L215.0 209.9 L213.0 225.8 L211.0 241.7 L209.6 252.7 L208.9 269.2 L213.3 288.7 L217.9 309.7 L216.0 325.8 L216.0 325.8 L214.1 340.6 L212.8 351.5 L211.1 362.9 L208.2 378.8 L204.4 399.0 L208.5 408.7 L216.7 425.2 L218.7 429.3 L223.8 442.6 L221.6 465.5 L218.2 481.2M231.5 165.1 L230.4 182.7 L229.4 199.0 L227.8 214.2 L225.7 230.0 L223.6 245.7 L222.1 257.1 L223.5 272.8 L229.6 291.2 L235.6 310.8 L233.2 327.2 L233.2 327.2 L231.0 341.6 L229.6 351.5 L227.3 363.6 L222.6 380.3 L217.3 399.0 L222.5 410.2 L232.9 429.9 L234.4 432.7 L237.6 447.6 L234.9 471.3 L233.0 488.2M243.6 167.8 L242.7 186.4 L241.9 204.4 L241.0 218.6 L240.0 233.8 L239.1 248.1 L238.2 261.5 L242.9 280.4 L247.2 293.6 L252.4 309.7 L250.3 324.5 L250.3 324.5 L247.8 341.1 L246.2 351.3 L242.9 364.7 L235.7 381.4 L228.1 400.4 L234.4 410.6 L243.4 425.3 L249.4 435.0 L253.4 448.7 L252.9 476.9 L252.0 495.9M255.2 167.1 L254.9 186.7 L254.6 204.6 L254.2 221.4 L253.8 235.8 L253.4 251.0 L253.0 265.1 L259.2 284.5 L262.5 295.0 L265.2 303.5 L265.9 318.4 L265.9 318.4 L262.7 338.3 L260.8 350.1 L256.9 364.8 L248.5 382.0 L240.9 402.0 L246.4 410.9 L253.1 421.7 L261.3 435.0 L266.1 449.5 L269.0 478.0 L269.0 497.4M266.1 161.1 L266.3 181.9 L266.4 198.6 L265.0 217.2 L263.0 233.1 L260.6 252.5 L259.5 266.7 L265.2 284.5 L268.5 295.0 L270.4 301.0 L272.8 319.4 L272.8 319.4 L272.1 334.9 L271.6 347.4 L269.8 362.7 L263.5 377.1 L253.9 400.8 L257.9 409.8 L262.3 419.6 L269.2 435.0 L273.2 449.7 L277.5 478.1 L278.0 498.0M86.4 487.0 L91.2 487.0 L98.7 484.3 L110.7 479.5 L124.9 479.3 L138.0 479.7 L154.6 479.1 L171.9 474.7 L186.0 475.8 L200.3 477.8 L212.2 479.4 L222.1 483.0 L231.6 487.3 L239.5 492.0M85.1 492.9 L90.6 492.9 L98.5 493.0 L110.4 493.5 L124.9 494.1 L138.0 495.8 L154.6 498.1 L172.0 501.0 L188.7 503.9 L202.9 505.2 L214.8 504.6 L224.3 501.9 L232.2 499.8 L238.8 498.5M80.7 513.0 L88.3 513.0 L98.1 513.2 L110.0 513.7 L124.9 514.2 L138.0 515.2 L154.6 516.5 L172.0 520.1 L190.5 523.8 L204.7 526.6 L216.7 527.3 L226.6 527.3 L233.0 527.3 L236.9 527.3M81.8 538.4 L87.5 539.0 L98.4 540.0 L110.3 540.6 L124.9 541.1 L138.0 541.4 L154.6 540.6 L172.0 542.1 L191.9 545.4 L206.3 548.3 L218.1 548.2 L227.8 547.8 L233.0 547.6 L236.7 547.5M86.4 487.0 L85.1 492.9 L80.7 513.0 L81.8 538.4 L84.0 575.0M91.2 487.0 L90.6 492.9 L88.3 513.0 L87.5 539.0 L87.0 575.0M98.7 484.3 L98.5 493.0 L98.1 513.2 L98.4 540.0 L98.8 575.0M110.7 479.5 L110.4 493.5 L110.0 513.7 L110.3 540.6 L110.7 575.0M124.9 479.3 L124.9 494.1 L124.9 514.2 L124.9 541.1 L124.9 575.0M138.0 479.7 L138.0 495.8 L138.0 515.2 L138.0 541.4 L138.0 575.0M154.6 479.1 L154.6 498.1 L154.6 516.5 L154.6 540.6 L154.6 575.0M171.9 474.7 L172.0 501.0 L172.0 520.1 L172.0 542.1 L172.0 575.0M186.0 475.8 L188.7 503.9 L190.5 523.8 L191.9 545.4 L193.2 575.0M200.3 477.8 L202.9 505.2 L204.7 526.6 L206.3 548.3 L207.5 575.0M212.2 479.4 L214.8 504.6 L216.7 527.3 L218.1 548.2 L219.3 575.0M222.1 483.0 L224.3 501.9 L226.6 527.3 L227.8 547.8 L228.8 575.0M231.6 487.3 L232.2 499.8 L233.0 527.3 L233.0 547.6 L233.0 575.0M239.5 492.0 L238.8 498.5 L236.9 527.3 L236.7 547.5 L236.5 575.0M20.7 120.5 L45.0 120.5 L76.9 120.4 L93.8 119.5 L119.2 118.7 L147.9 119.5 L171.5 121.9 L200.0 129.7 L217.6 137.1 L231.2 144.4 L240.3 152.6 L245.4 155.1 L250.5 152.6 L253.6 147.5 L251.0 139.0M70.4 125.7 L71.9 120.4M93.8 130.0 L95.3 119.5M115.2 133.4 L116.7 118.8M133.5 135.9 L135.0 119.1M151.6 139.9 L153.1 120.0M168.8 144.3 L170.3 121.8M185.4 148.1 L186.9 126.1M201.2 151.6 L202.7 130.8M217.6 158.1 L219.1 137.9M231.5 165.1 L233.0 146.1M243.6 167.8 L245.1 154.9M35.6 113.7 L39.6 119.7M43.5 111.8 L47.5 119.7M50.4 109.8 L53.4 120.6M62.3 107.8 L67.2 119.7M80.0 104.9 L83.0 120.6M100.7 102.9 L102.7 117.7M124.4 101.9 L124.4 117.7M147.9 102.6 L146.2 119.5M169.0 104.3 L166.5 121.2M190.0 108.7 L186.0 126.0M209.5 115.4 L202.7 130.5M225.8 123.6 L219.0 137.8M240.0 132.4 L231.9 145.0M249.5 141.2 L240.7 153.4M150.0 137.5 L180.0 140.6 L200.0 145.9 L214.9 152.0 L227.1 156.1 L236.6 157.5 L245.4 156.1 L252.6 150.5 L254.6 147.0 L259.0 146.0M227.1 156.1 L233.2 164.8M236.6 157.5 L245.4 167.8M245.4 156.1 L255.6 166.8M252.6 150.5 L263.7 161.7M253.6 147.5 L266.3 155.6M20.9 121.0 L22.4 135.6 L22.2 150.0M21.8 118.2 L27.7 116.5 L37.0 114.4 L39.6 118.2M24.3 113.6 L30.0 116.2M171.2 388.8 L181.4 405.1 L197.6 415.3 L220.0 434.6 L238.0 447.0 L256.8 454.4 L280.5 478.1M178.5 401.0 L204.6 421.2 L228.3 442.5 L256.8 458.0 L278.0 482.0M45.8 294.0 L64.8 308.3 L93.3 324.9 L107.5 336.8M52.3 510.4 L70.3 508.2M44.4 512.6 L70.3 508.2 L55.9 531.3M55.9 531.3 L81.9 501.7M71.8 524.1 L81.9 502.5M84.8 501.0 L90.5 512.6 L81.9 521.2M55.9 531.3 L71.8 524.1 L90.5 512.6M58.8 537.0 L80.4 521.9M58.8 537.0 L74.7 539.2 L92.0 535.6 L100.0 535.6M41.5 475.8 L43.0 519.8M54.5 482.3 L52.3 510.4M225.0 465.8 L240.1 475.9 L255.3 488.1 L264.6 504.7M248.0 460.0 L255.3 465.8 L271.1 478.7 L281.2 476.6M266.8 460.0 L271.1 478.7 L265.3 504.7M275.4 460.0 L281.2 476.6 L279.8 501.8M225.0 485.9 L229.3 487.4 L240.1 475.9M229.3 487.4 L242.3 498.2 L255.3 488.1M225.0 497.5 L242.3 498.2 L250.2 511.2 L265.3 504.7 L279.8 501.8M225.0 510.4 L238.0 506.1 L250.2 511.2M229.3 511.9 L268.2 516.9 L279.8 501.8M268.2 516.9 L276.9 526.3 L284.1 522.0 L279.8 501.8M239.4 514.8 L261.0 531.3 L276.9 526.3M253.8 514.8 L261.0 531.3" clip-path="url(#cl)" stroke="#141414" stroke-width="0.9" fill="none" stroke-linejoin="round"/><polygon points="20.8,116.7 25.4,113.4 38.1,110.8 63.6,106.5 101.7,102.2 124.6,101.2 150.0,101.8 170.3,104.7 190.7,109.0 211.0,115.4 231.4,125.6 249.2,137.0 259.3,144.7 265.7,153.6 268.2,166.3 269.5,179.0 269.0,196.8 266.5,217.0 264.4,232.4 263.1,240.0 261.9,252.7 259.3,268.0 250.4,282.0 247.9,284.5 259.3,294.7 269.5,306.1 275.1,321.4 274.1,336.6 273.3,351.9 269.5,369.7 265.7,382.4 266.0,390.0 265.4,410.4 267.1,430.7 273.9,454.5 280.6,478.2 280.6,498.6 284.0,518.9 278.9,525.7 263.7,536.6 251.8,527.4 241.6,517.2 236.5,527.4 237.5,546.1 236.5,564.8 217.9,569.8 183.9,564.8 150.0,562.0 140.0,563.7 113.6,569.8 100.3,569.8 87.1,559.7 81.0,550.5 75.9,540.3 70.8,536.3 58.6,537.3 50.5,527.1 42.4,519.0 36.3,509.8 40.3,486.4 41.4,475.3 46.4,460.0 50.9,440.9 57.7,403.6 53.0,390.0 49.6,372.2 44.5,359.5 40.7,346.8 39.4,321.4 40.7,303.6 35.6,290.9 28.0,275.6 20.2,263.8 21.5,249.5 31.7,240.7 33.0,238.0 30.4,227.1 24.9,214.9 19.5,204.0 19.3,184.0 19.8,176.4 20.3,156.0 19.8,135.8" fill="none" stroke="#141414" stroke-width="1" stroke-linejoin="round"/></g></svg>
<div class="t" style="top:6px;left:7px">Objects</div><div class="t" style="top:6px;left:66px;letter-spacing:0.45px">1</div><div class="t" style="top:23px;left:7px">Vertices</div><div class="t" style="top:23px;left:66px;letter-spacing:0.45px">1,920</div><div class="t" style="top:40px;left:7px">Edges</div><div class="t" style="top:40px;left:66px;letter-spacing:0.45px">3,776</div><div class="t" style="top:57px;left:7px">Faces</div><div class="t" style="top:57px;left:66px;letter-spacing:0.45px">1,856</div><div class="t" style="top:74px;left:7px">Triangles</div><div class="t" style="top:74px;left:66px;letter-spacing:0.45px">3,712</div>
</body></html>
